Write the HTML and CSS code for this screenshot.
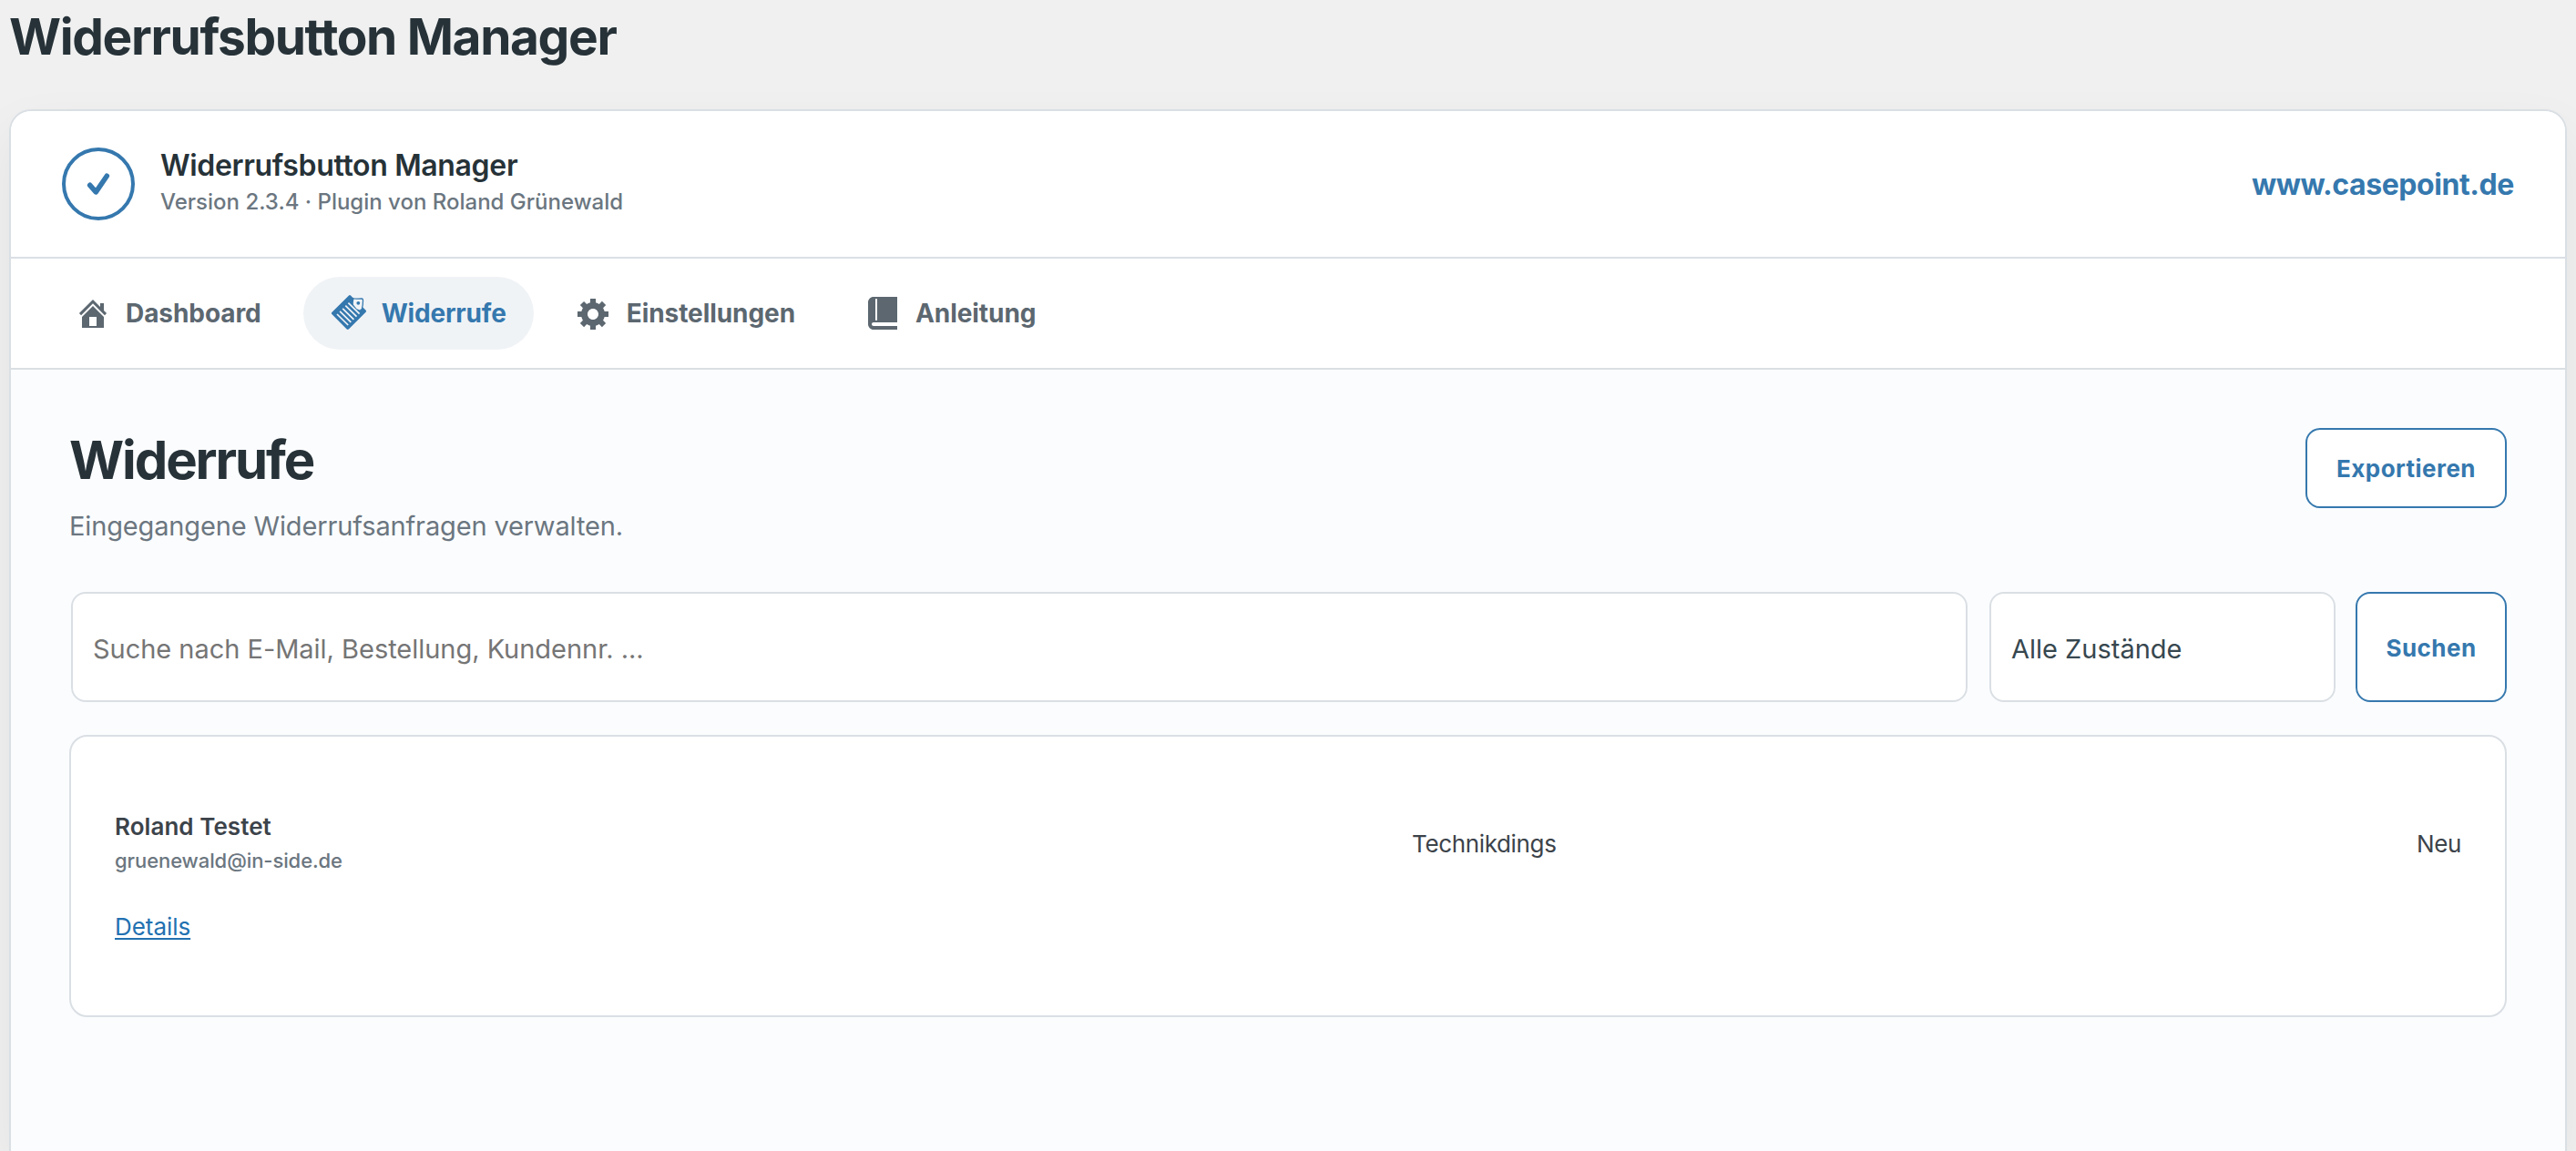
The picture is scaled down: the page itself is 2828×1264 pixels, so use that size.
FILE: index.html
```html
<!DOCTYPE html>
<html lang="de">
<head>
<meta charset="utf-8">
<title>Widerrufsbutton Manager</title>
<link rel="stylesheet" href="styles.css">
</head>
<body>
<h1 class="page-title">Widerrufsbutton Manager</h1>
<main class="panel">
  <header class="panel-header">
    <div class="brand">
      <svg class="brand-logo" viewBox="0 0 80 80" fill="none" stroke="currentColor">
        <circle cx="40" cy="40" r="38" stroke-width="4"/>
        <path d="M30.7 41.3l6.6 7.6 12-17.7" stroke-width="5.6" stroke-linecap="round" stroke-linejoin="round"/>
      </svg>
      <div>
        <div class="brand-name">Widerrufsbutton Manager</div>
        <div class="brand-meta">Version 2.3.4 · Plugin von Roland Grünewald</div>
      </div>
    </div>
    <a class="site-link" href="#">www.casepoint.de</a>
  </header>
  <nav class="tabs">
    <a class="tab" href="#">
      <svg class="tab-icon" viewBox="0 0 20 20"><path d="M16 8.5l1.53 1.53-1.06 1.06L10 4.6l-6.47 6.49-1.06-1.06L10 2.5l4 4v-2h2v4zm-6-2.46l6 5.99V18H4v-5.97zM12 17v-5H8v5h4z"/></svg>
      Dashboard
    </a>
    <a class="tab tab-active" href="#">
      <svg class="tab-icon" viewBox="0 0 40 40">
        <path d="M20 .5Q21 -.4 22 .5L25.6 4.2Q24.4 7.4 25 10.8L28.6 15.2L32 16.4L35.4 13.6L38.6 16.8Q39.5 17.8 38.6 18.8L19.8 37.6Q18.7 38.5 17.7 37.6L1.3 21Q.4 20 1.3 19z"/>
        <path d="M24 3.2C27 5 30 3.8 34.4 4Q35.6 4.2 35.5 6C35.5 9 35.3 12 34.4 14.6" fill="none" stroke="currentColor" stroke-width="1.3"/>
        <circle cx="30.3" cy="8.8" r="1.9"/>
        <path d="M7 21l12.2 12M10.1 17.9l12.2 12M13.2 14.8l12.2 12M16.3 11.7l12.2 12M19.4 8.7l12.2 12" fill="none" stroke="#f0f3f6" stroke-width="1.7"/>
      </svg>
      Widerrufe
    </a>
    <a class="tab" href="#">
      <svg class="tab-icon" viewBox="0 0 20 20"><path d="M18 12h-2.18c-.17.7-.44 1.35-.81 1.93l1.54 1.54-2.1 2.1-1.54-1.54c-.58.36-1.23.63-1.91.79V19H8v-2.18c-.68-.16-1.33-.43-1.91-.79l-1.54 1.54-2.12-2.12 1.54-1.54c-.36-.58-.63-1.23-.79-1.91H1V9.03h2.17c.16-.7.44-1.35.8-1.94L2.43 5.55l2.1-2.1 1.54 1.54c.58-.37 1.24-.64 1.93-.81V2h3v2.18c.68.16 1.33.43 1.91.79l1.54-1.54 2.12 2.12-1.54 1.54c.36.59.64 1.24.8 1.94H18V12zm-8.5 1.5c1.66 0 3-1.34 3-3s-1.34-3-3-3-3 1.34-3 3 1.34 3 3 3z"/></svg>
      Einstellungen
    </a>
    <a class="tab" href="#">
      <svg class="tab-icon" viewBox="0 0 20 20"><path d="M5 17h13v2H5c-1.66 0-3-1.34-3-3V4c0-1.66 1.34-3 3-3h13v14H5c-.55 0-1 .45-1 1s.45 1 1 1zm2-3.5v-11c0-.28-.22-.5-.5-.5s-.5.22-.5.5v11c0 .28.22.5.5.5s.5-.22.5-.5z"/></svg>
      Anleitung
    </a>
  </nav>
  <section class="content">
    <div class="content-head">
      <div>
        <h2 class="content-title">Widerrufe</h2>
        <p class="content-lead">Eingegangene Widerrufsanfragen verwalten.</p>
      </div>
      <button class="button button-export">Exportieren</button>
    </div>
    <form class="filters">
      <input class="field field-search" type="text" placeholder="Suche nach E-Mail, Bestellung, Kundennr. ...">
      <select class="field field-state"><option>Alle Zustände</option></select>
      <button class="button button-search" type="button">Suchen</button>
    </form>
    <div class="list">
      <div class="row">
        <div>
          <div class="row-name">Roland Testet</div>
          <div class="row-mail">gruenewald@in-side.de</div>
        </div>
        <div class="row-product">Technikdings</div>
        <div class="row-state">Neu</div>
      </div>
      <a class="details" href="#">Details</a>
    </div>
  </section>
</main>
</body>
</html>
```
FILE: styles.css
```css
* { box-sizing: border-box; }

body {
  display: flex;
  flex-direction: column;
  margin: 0;
  height: 100vh;
  overflow: hidden;
  background: #f0f0f0;
  color: #3c434a;
  font-family: Inter, "Liberation Sans", sans-serif;
  font-size: 26px;
}

a { color: inherit; text-decoration: none; }

.page-title {
  margin: 0 0 40px 10px;
  color: #263238;
  font-size: 55px;
  font-weight: 700;
  line-height: 80px;
  letter-spacing: -1.35px;
}

.panel {
  flex: 1;
  margin: 0 10px;
  border: 2px solid #dadfe4;
  border-bottom: 0;
  border-radius: 24px 24px 0 0;
  background: #fbfcfe;
  box-shadow: 0 24px 60px rgba(0, 0, 0, .06);
  overflow: hidden;
}

.panel-header {
  display: flex;
  align-items: center;
  justify-content: space-between;
  height: 162px;
  padding: 0 56px;
  border-bottom: 2px solid #dadfe4;
  background: #fff;
}

.brand { display: flex; align-items: center; gap: 28px; }
.brand-logo { width: 80px; height: 80px; color: #3578ae; }
.brand-name {
  color: #263238;
  font-size: 32px;
  font-weight: 600;
  line-height: 40px;
  letter-spacing: -.34px;
}
.brand-meta {
  color: #6b7680;
  font-size: 24px;
  font-weight: 500;
  line-height: 40px;
}
.site-link {
  color: #3578ae;
  font-size: 32px;
  font-weight: 700;
  letter-spacing: -.42px;
}

.tabs {
  display: flex;
  align-items: center;
  gap: 16px;
  height: 122px;
  padding: 0 40px;
  border-bottom: 2px solid #dadfe4;
  background: #fff;
}
.tab {
  display: flex;
  align-items: center;
  gap: 16px;
  height: 80px;
  padding: 0 30px;
  border-radius: 40px;
  color: #5c6770;
  font-size: 28px;
  font-weight: 700;
  letter-spacing: -.07px;
}
.tab-active {
  background: #f0f3f6;
  color: #3578ae;
  letter-spacing: -.18px;
}
.tab-icon { width: 40px; height: 40px; fill: currentColor; }

.content { padding: 64px 64px 0; }
.content-head {
  display: flex;
  align-items: flex-start;
  justify-content: space-between;
  height: 180px;
}
.content-title {
  margin: 0;
  color: #263238;
  font-size: 58px;
  font-weight: 700;
  line-height: 70px;
  letter-spacing: -2.1px;
}
.content-lead {
  margin: 16px 0 0;
  color: #6b7680;
  font-size: 29px;
  line-height: 43px;
  letter-spacing: -.14px;
}

.button {
  padding: 1px 0 0;
  border: 2px solid #3578ae;
  border-radius: 16px;
  background: #fff;
  color: #3578ae;
  font-family: inherit;
  font-size: 26px;
  font-weight: 700;
  letter-spacing: .45px;
}
.button-export { width: 221px; height: 88px; }
.button-search { width: 166px; }

.filters { display: flex; gap: 20px; height: 121px; }
.field {
  appearance: none;
  margin: 0 2px;
  padding: 3px 22px 0;
  border: 2px solid #dadfe4;
  border-radius: 16px;
  background: #fff;
  color: #37474f;
  font-family: inherit;
  font-size: 29px;
}
.field::placeholder { color: #757575; }
.field-search { flex: 1; letter-spacing: -.03px; }
.field-state { width: 380px; }

.list {
  height: 310px;
  margin-top: 36px;
  padding: 79px 48px 0;
  border: 2px solid #dadfe4;
  border-radius: 20px;
  background: #fff;
}
.row {
  display: grid;
  grid-template-columns: 1424px 1fr auto;
  align-items: center;
}
.row-name { font-weight: 600; line-height: 40px; letter-spacing: .05px; }
.row-mail {
  color: #6b7680;
  font-size: 22px;
  font-weight: 500;
  line-height: 34px;
  letter-spacing: -.08px;
}
.row-product, .row-state { padding-top: 2px; letter-spacing: -.35px; }
.details {
  display: inline-block;
  margin-top: 36px;
  color: #2271b1;
  line-height: 40px;
  letter-spacing: -.05px;
  text-decoration: underline;
  text-decoration-thickness: 2px;
  text-underline-offset: 3px;
}
```
